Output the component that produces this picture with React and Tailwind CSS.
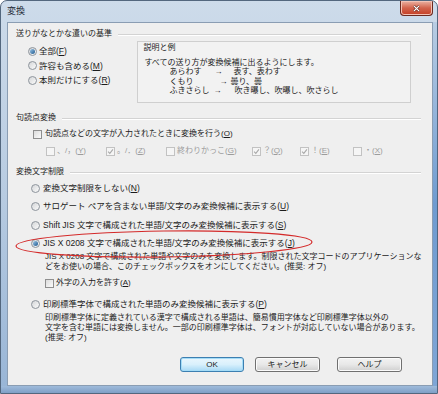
const font = "font-['Liberation_Sans','Noto_Sans_CJK_JP',sans-serif]"

function Radio({ checked }) {
  return (
    <span className="flex h-[9px] w-[9px] shrink-0 items-center justify-center rounded-full border border-[#8d949c] bg-linear-to-br from-[#d4d6d8] to-[#fbfbfb]">
      {checked && (
        <span className="h-[5px] w-[5px] rounded-full bg-linear-to-br from-[#9cc8ea] to-[#1d5a8e]" />
      )}
    </span>
  )
}

function Check({ checked, disabled }) {
  return (
    <span
      className={
        disabled
          ? "flex h-[9px] w-[9px] shrink-0 items-center justify-center border border-[#c2c2c2] bg-[#f5f5f5]"
          : "flex h-[9px] w-[9px] shrink-0 items-center justify-center border border-[#8f8f8f] bg-linear-to-br from-[#dcdcdc] to-[#fbfbfb]"
      }
    >
      {checked && (
        <svg viewBox="0 0 8 8" className="h-[7px] w-[7px]">
          <path
            d="M1.2 4.2 L3.2 6.2 L6.8 1.6"
            fill="none"
            stroke={disabled ? "#a9a9a9" : "#2c2c2c"}
            strokeWidth="1.2"
          />
        </svg>
      )}
    </span>
  )
}

function Heading({ children }) {
  return (
    <div className="flex h-[14px] items-center gap-[6px]">
      <span className="whitespace-nowrap">{children}</span>
      <span className="h-px flex-1 bg-[#d3d3d3] shadow-[0_1px_0_#ffffff]" />
    </div>
  )
}

function Opt({ children, checked }) {
  return (
    <div className="flex h-[14px] items-center gap-[3px] pl-[15px] text-[8.5px] whitespace-nowrap">
      <Radio checked={checked} />
      <span>{children}</span>
    </div>
  )
}

function Small({ checked, children, w }) {
  return (
    <div className={`flex items-center gap-[2px] text-[#9c9c9c] ${w}`}>
      <Check checked={checked} disabled />
      <span className="whitespace-nowrap">{children}</span>
    </div>
  )
}

function Button({ children, primary }) {
  return (
    <button
      className={
        primary
          ? "flex h-[15px] w-[64px] items-center justify-center rounded-[3px] border border-[#3c7fb1] bg-linear-to-b from-[#eaf6fd] via-[#d9f0fc] to-[#a7d9f5] shadow-[inset_0_0_0_1px_#a4dcf7]"
          : "flex h-[15px] w-[65px] items-center justify-center rounded-[3px] border border-[#707070] bg-linear-to-b from-[#f2f2f2] via-[#e8e8e8] to-[#cfcfcf] shadow-[inset_0_0_0_1px_#fbfbfb]"
      }
    >
      {children}
    </button>
  )
}

export default function App() {
  return (
    <div className={`relative flex h-[394px] w-[438px] flex-col overflow-hidden rounded-t-[7px] border border-[#53677e] bg-linear-to-b from-[#cddbea] via-[#b7cbe1] to-[#98b5d6] text-[8px] leading-[10px] text-[#1b1b1b] ${font}`}>
      {/* title bar */}
      <div className="flex h-[21px] shrink-0 items-start justify-between">
        <span className="pt-[5px] pl-[6px] text-[9px] text-[#1e2a36]">変換</span>
        <div className="mr-[4px] flex h-[15px] w-[33px] items-center justify-center rounded-b-[4px] border border-t-0 border-[#6b2a20] bg-linear-to-b from-[#eab2a3] via-[#d2634c] to-[#c43d22] shadow-[inset_0_0_0_1px_#f3c2b5]">
          <svg viewBox="0 0 10 8" className="h-[7px] w-[9px]">
            <path d="M2 1 L8 7 M8 1 L2 7" stroke="#5a1c12" strokeWidth="2.6" />
            <path d="M2 1 L8 7 M8 1 L2 7" stroke="#ffffff" strokeWidth="1.5" />
          </svg>
        </div>
      </div>

      <div className="flex flex-1">
        <div className="w-[6px] shrink-0" />

        {/* client area */}
        <div className="flex flex-1 flex-col border border-[#8a9db3] bg-[#efefef] pr-[11px] pl-[8px]">
          <div className="mt-[4px]">
            <Heading>送りがなとかな遣いの基準</Heading>
          </div>

          <div className="flex">
            <div className="flex flex-col pt-[3px] pl-[12px] text-[8.5px]">
              <div className="flex h-[14.5px] items-center gap-[2px]">
                <Radio checked />
                <span>
                  全部(<u>F</u>)
                </span>
              </div>
              <div className="flex h-[14.5px] items-center gap-[2px]">
                <Radio />
                <span>
                  許容も含める(<u>M</u>)
                </span>
              </div>
              <div className="flex h-[14.5px] items-center gap-[2px]">
                <Radio />
                <span>
                  本則だけにする(<u>R</u>)
                </span>
              </div>
            </div>

            <div className="mr-[10px] ml-auto flex h-[62px] w-[274px] flex-col border border-[#cfcfcf] bg-[#f2f2f2] pl-[5px] whitespace-nowrap">
              <div className="mt-[1px] h-[10px]">説明と例</div>
              <div className="mt-[5px] flex h-[9.5px] items-center pl-[1px]">
                すべての送り方が変換候補に出るようにします。
              </div>
              <div className="flex h-[9.5px] items-center pl-[26px]">
                <span className="w-[45px]">あらわす</span>
                <span className="w-[19px]">→</span>
                <span>表す、表わす</span>
              </div>
              <div className="flex h-[9.5px] items-center pl-[26px]">
                <span className="w-[50px]">くもり</span>
                <span className="w-[11px]">→</span>
                <span>曇り、曇</span>
              </div>
              <div className="flex h-[9.5px] items-center pl-[26px]">
                <span className="w-[44px]">ふきさらし</span>
                <span className="w-[21px]">→</span>
                <span>吹き曝し、吹曝し、吹さらし</span>
              </div>
            </div>
          </div>

          <div className="mt-[8px]">
            <Heading>句読点変換</Heading>
          </div>
          <div className="mt-[2px] flex h-[14px] items-center gap-[3px] pl-[17px] whitespace-nowrap">
            <Check />
            <span>
              句読点などの文字が入力されたときに変換を行う(<u>O</u>)
            </span>
          </div>
          <div className="mt-[3px] flex h-[14px] items-center pl-[30px]">
            <Small w="w-[60px]">
              、/，(<u>Y</u>)
            </Small>
            <Small checked w="w-[60px]">
              。/．(<u>Z</u>)
            </Small>
            <Small w="w-[86px]">
              終わりかっこ(<u>G</u>)
            </Small>
            <Small checked w="w-[48px]">
              ？(<u>Q</u>)
            </Small>
            <Small checked w="w-[53px]">
              ！(<u>E</u>)
            </Small>
            <Small w="w-[40px]">
              ・(<u>X</u>)
            </Small>
          </div>

          <div className="mt-[7px]">
            <Heading>変換文字制限</Heading>
          </div>
          <div className="mt-[2px]">
            <Opt>
              変換文字制限をしない(<u>N</u>)
            </Opt>
          </div>
          <div className="mt-[4px]">
            <Opt>
              サロゲート ペアを含まない単語/文字のみ変換候補に表示する(<u>U</u>)
            </Opt>
          </div>
          <div className="mt-[5px]">
            <Opt>
              Shift JIS 文字で構成された単語/文字のみ変換候補に表示する(<u>S</u>)
            </Opt>
          </div>
          <div className="mt-[4px]">
            <Opt checked>
              JIS X 0208 文字で構成された単語/文字のみ変換候補に表示する(<u>J</u>)
            </Opt>
          </div>
          <div className="mt-[2px] flex flex-col pl-[29px] whitespace-nowrap">
            <div className="h-[10px]">
              JIS X 0208 文字で構成された単語や文字のみを変換します。制限された文字コードのアプリケーションな
            </div>
            <div className="h-[10px]">
              どをお使いの場合、このチェックボックスをオンにしてください。(推奨: オフ)
            </div>
          </div>
          <div className="mt-[4px] flex h-[14px] items-center gap-[2px] pl-[29px]">
            <Check />
            <span>
              外字の入力を許す(<u>A</u>)
            </span>
          </div>
          <div className="mt-[7px]">
            <Opt>
              印刷標準字体で構成された単語のみ変換候補に表示する(<u>P</u>)
            </Opt>
          </div>
          <div className="mt-[2px] flex flex-col pl-[29px] whitespace-nowrap">
            <div className="h-[10px]">
              印刷標準字体に定義されている漢字で構成される単語は、簡易慣用字体など印刷標準字体以外の
            </div>
            <div className="h-[10px]">
              文字を含む単語には変換しません。一部の印刷標準字体は、フォントが対応していない場合があります。
            </div>
            <div className="h-[10px]">(推奨: オフ)</div>
          </div>

          <div className="mt-[14px] flex items-center pl-[164px]">
            <Button primary>OK</Button>
            <div className="ml-[11px]">
              <Button>キャンセル</Button>
            </div>
            <div className="ml-[17px]">
              <Button>ヘルプ</Button>
            </div>
          </div>
        </div>

        <div className="w-[5px] shrink-0 bg-linear-to-b from-[#b9cde3] via-[#6f9bd0] to-[#7fa6d6]" />
      </div>
      <div className="h-[7px] shrink-0 bg-linear-to-b from-[#9fbbdb] to-[#7f9fc6]" />

      {/* hand-drawn annotation */}
      <svg className="pointer-events-none absolute inset-0" width="438" height="394">
        <ellipse
          cx="163"
          cy="243"
          rx="148"
          ry="13"
          fill="none"
          stroke="#d42a2a"
          strokeWidth="1.2"
          transform="rotate(-0.8 163 243)"
        />
      </svg>
    </div>
  )
}
